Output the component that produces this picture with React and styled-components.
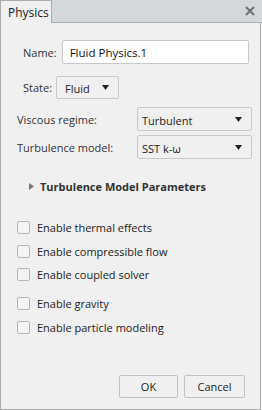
import React from 'react';
import styled, { createGlobalStyle } from 'styled-components';

const Global = createGlobalStyle`
  html, body { margin: 0; padding: 0; background: #f0f0f0; }
  body { font-family: "Open Sans", "Noto Sans", sans-serif; font-size: 11px; color: #222; }
`;

const Window = styled.div`
  width: 262px;
  height: 410px;
  display: flex;
  flex-direction: column;
  box-sizing: border-box;
`;

const TabBar = styled.div`
  display: flex;
  align-items: stretch;
  height: 23px;
  background: #d5d8da;
  border-bottom: 1px solid #a9abad;
  box-sizing: border-box;
`;

const Tab = styled.div`
  width: 52px;
  box-sizing: border-box;
  padding: 3px 0 0 7px;
  background: #f0f0f0;
  border: 1px solid #a9abad;
  border-bottom: none;
  margin-bottom: -1px;
  font-size: 12px;
  color: #222;
`;

const Close = styled.div`
  margin-left: auto;
  width: 24px;
  display: flex;
  align-items: center;
  justify-content: center;
`;

const Panel = styled.div`
  flex: 1;
  display: flex;
  flex-direction: column;
  border: 1px solid #a9abad;
  border-top: none;
  margin-right: 1px;
  padding: 17px 0 0 0;
  box-sizing: border-box;
`;

const Row = styled.div`
  display: flex;
  align-items: center;
  padding-left: ${(p) => p.indent}px;
  margin-top: ${(p) => p.top || 0}px;
`;

const Label = styled.div`
  width: ${(p) => (p.w ? `${p.w}px` : 'auto')};
  color: #333;
  padding-right: ${(p) => p.gap || 0}px;
`;

const TextBox = styled.div`
  width: 187px;
  height: 24px;
  box-sizing: border-box;
  background: #fff;
  border: 1px solid #c8c8c8;
  border-radius: 2px;
  padding: 0 0 0 7px;
  display: flex;
  align-items: center;
  font-size: 11.5px;
  color: #111;
`;

const Select = styled.div`
  width: ${(p) => p.w}px;
  height: ${(p) => p.h}px;
  box-sizing: border-box;
  border: 1px solid #c8c8c8;
  border-radius: 2px;
  background: #f0f0f0;
  display: flex;
  align-items: center;
  padding: 0 9px 0 ${(p) => p.pl || 4}px;
  color: #222;
  span { flex: 1; padding-top: 2px; }
`;

const Arrow = () => (
  <svg width="7" height="5" viewBox="0 0 7 5">
    <path d="M0 0 L7 0 L3.5 5 Z" fill="#222" />
  </svg>
);

const Expander = styled.div`
  display: flex;
  align-items: center;
  gap: 6px;
  padding-left: 28px;
  margin-top: 20px;
  font-weight: bold;
  color: #333;
`;

const Checks = styled.div`
  display: flex;
  flex-direction: column;
  margin-top: 24px;
  padding-left: 16px;
`;

const Check = styled.div`
  display: flex;
  align-items: center;
  gap: 7px;
  height: 18px;
  margin-top: ${(p) => p.top || 0}px;
`;

const Box = styled.div`
  width: 13px;
  height: 13px;
  box-sizing: border-box;
  border: 1px solid #b4b4b4;
  border-radius: 2px;
  background: #f4f4f4;
`;

const Footer = styled.div`
  margin-top: auto;
  display: flex;
  justify-content: flex-end;
  gap: 6px;
  padding: 0 15px 11px 0;
`;

const Button = styled.div`
  width: 59px;
  height: 23px;
  box-sizing: border-box;
  border: 1px solid #c2c2c2;
  border-radius: 2px;
  background: #f0f0f0;
  display: flex;
  align-items: center;
  justify-content: center;
  color: #222;
  ${(p) => p.wide && 'width: 61px;'}
`;

const checks = [
  ['Enable thermal effects', 0],
  ['Enable compressible flow', 6],
  ['Enable coupled solver', 5],
  ['Enable gravity', 11],
  ['Enable particle modeling', 6],
];

export default function App() {
  return (
    <Window>
      <Global />
      <TabBar>
        <Tab>Physics</Tab>
        <Close>
          <svg width="10" height="10" viewBox="0 0 10 10">
            <path d="M1 1 L9 9 M9 1 L1 9" stroke="#6e6e6e" strokeWidth="2" />
          </svg>
        </Close>
      </TabBar>
      <Panel>
        <Row indent={22}>
          <Label gap={5}>Name:</Label>
          <TextBox>Fluid Physics.1</TextBox>
        </Row>
        <Row indent={22} top={12}>
          <Label gap={4}>State:</Label>
          <Select w={63} h={23} pl={8}>
            <span>Fluid</span>
            <Arrow />
          </Select>
        </Row>
        <Row indent={16} top={8}>
          <Label w={120}>Viscous regime:</Label>
          <Select w={115} h={24}>
            <span>Turbulent</span>
            <Arrow />
          </Select>
        </Row>
        <Row indent={16} top={4}>
          <Label w={120}>Turbulence model:</Label>
          <Select w={115} h={24}>
            <span>SST k-ω</span>
            <Arrow />
          </Select>
        </Row>
        <Expander>
          <svg width="5" height="7" viewBox="0 0 5 7">
            <path d="M0 0 L5 3.5 L0 7 Z" fill="#777" />
          </svg>
          Turbulence Model Parameters
        </Expander>
        <Checks>
          {checks.map(([t, top]) => (
            <Check key={t} top={top}>
              <Box />
              {t}
            </Check>
          ))}
        </Checks>
        <Footer>
          <Button>OK</Button>
          <Button wide>Cancel</Button>
        </Footer>
      </Panel>
    </Window>
  );
}
